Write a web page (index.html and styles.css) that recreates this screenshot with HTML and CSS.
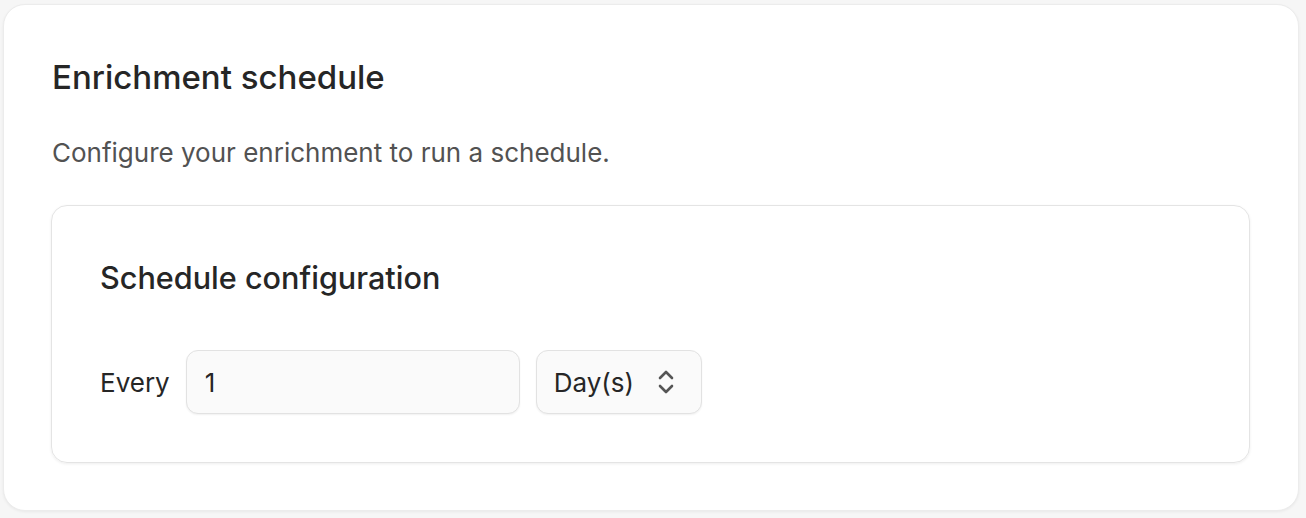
FILE: index.html
```html
<!DOCTYPE html>
<html>
<head>
<meta charset="utf-8">
<link rel="stylesheet" href="styles.css">
</head>
<body>
<div class="page">
  <section class="card">
    <h1 class="title">Enrichment schedule</h1>
    <p class="desc">Configure your enrichment to run a schedule.</p>
    <div class="inner">
      <h2 class="subtitle">Schedule configuration</h2>
      <div class="row">
        <span class="label">Every</span>
        <div class="input">1</div>
        <div class="select">
          <span>Day(s)</span>
          <svg class="chev" width="22" height="32" viewBox="0 0 22 32" fill="none" stroke="#555" stroke-width="2.6" stroke-linecap="round" stroke-linejoin="round">
            <path d="M5 12 L11 6 L17 12"/>
            <path d="M5 20 L11 26 L17 20"/>
          </svg>
        </div>
      </div>
    </div>
  </section>
</div>
</body>
</html>
```
FILE: styles.css
```css
* { box-sizing: border-box; }
html, body { margin: 0; padding: 0; }
body {
  background: #f6f6f6;
  font-family: Inter, "Noto Sans", sans-serif;
  color: #262626;
  width: 1306px;
  height: 518px;
  overflow: hidden;
}
.page {
  padding: 4px 7px 7px 3px;
}
.card {
  background: #fff;
  border: 1px solid #ececec;
  border-radius: 22px;
  box-shadow: 0 1px 3px rgba(0,0,0,0.06);
  padding: 47px 48px 48px 47px;
  height: 507px;
}
.title {
  margin: 0;
  padding-left: 1px;
  font-size: 33px;
  font-weight: 500;
  line-height: 50px;
  letter-spacing: 0;
  color: #262626;
}
.desc {
  margin: 33px 0 0 0;
  padding-left: 1px;
  font-size: 26px;
  line-height: 36px;
  color: #525252;
  font-weight: 400;
}
.inner {
  margin-top: 34px;
  border: 1px solid #e4e4e4;
  border-radius: 16px;
  box-shadow: 0 1px 3px rgba(0,0,0,0.07);
  padding: 48px 48px 48px 48px;
}
.subtitle {
  margin: 0;
  font-size: 30.6px;
  font-weight: 500;
  line-height: 48px;
  letter-spacing: 0;
  color: #262626;
}
.row {
  margin-top: 48px;
  display: flex;
  align-items: center;
  gap: 16px;
}
.label {
  font-size: 26px;
  color: #262626;
}
.input {
  width: 334px;
  height: 64px;
  background: #fafafa;
  border: 1px solid #e2e2e2;
  border-radius: 12px;
  box-shadow: 0 1px 2px rgba(0,0,0,0.06);
  display: flex;
  align-items: center;
  padding-left: 18px;
  font-size: 26px;
  color: #262626;
}
.select {
  width: 166px;
  height: 64px;
  background: #fafafa;
  border: 1px solid #e2e2e2;
  border-radius: 12px;
  box-shadow: 0 1px 2px rgba(0,0,0,0.06);
  display: flex;
  align-items: center;
  justify-content: space-between;
  padding: 0 24px 0 17px;
  font-size: 26px;
  color: #262626;
}
.chev { display: block; }
```
